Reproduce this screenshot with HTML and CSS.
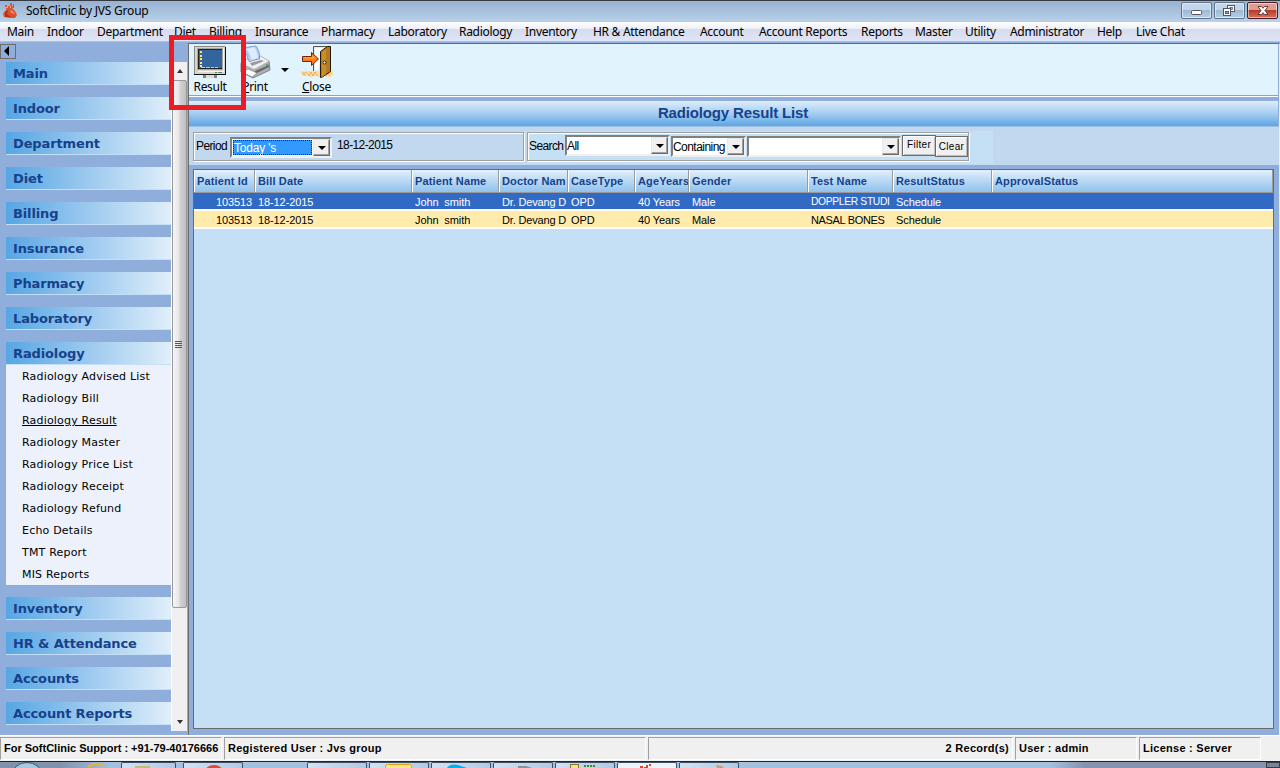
FILE: index.html
```html
<!DOCTYPE html>
<html lang="en">
<head>
    <meta charset="UTF-8">
    <meta name="viewport" content="width=device-width, initial-scale=1.0">
    <title>SoftClinic by JVS Group</title>
    <link rel="stylesheet" href="styles.css">
</head>
<body>
    <div class="titlebar">
        <svg class="app-icon" width="16" height="18" viewBox="0 0 16 18">
            <path d="M4 8 L6 6 L10 6 L13 9 L15 13 L13 16 L8 16 L2 15 L1 12 L3 9 Z" fill="#dc4f2c"/>
            <path d="M3 10 L6 8 L5 12 L9 15 L3 15 Z" fill="#b3331b"/>
            <path d="M8 8 L11 9 L13 12 L9 11 Z" fill="#f08a68"/>
            <path d="M3 3h2v2h-2z M6 4h2v3h-2z M8 1h2v3h-2z M11 2h1v3h-1z M9 4h3v2h-3z M4 6h2v1h-2z" fill="#e2542b"/>
        </svg>
        <span class="app-title">SoftClinic by JVS Group</span>
        <div class="win-buttons">
            <div class="win-btn"><svg width="30" height="15" viewBox="0 0 30 15"><rect x="9.5" y="7.5" width="10" height="4" rx="1" fill="#fff" stroke="#535666"/></svg></div>
            <div class="win-btn"><svg width="30" height="15" viewBox="0 0 30 15"><rect x="12.5" y="2.5" width="7" height="6" fill="#fff" stroke="#535666"/><rect x="15" y="4.5" width="2.5" height="2" fill="#9fb6d0" stroke="#535666" stroke-width=".7"/><rect x="8.5" y="5.5" width="7" height="7" fill="#fff" stroke="#535666"/><rect x="10.5" y="8.5" width="3" height="2" fill="#9fb6d0" stroke="#535666"/></svg></div>
            <div class="win-btn close"><svg width="30" height="15" viewBox="0 0 30 15"><path d="M10 3.500h3.500l1.500 1.800 1.500-1.800h3.500l-3 4 3 4h-3.500l-1.500-1.800-1.500 1.800h-3.500l3-4z" fill="#fff" stroke="#5a3c46"/></svg></div>
        </div>
    </div>

    <div class="menubar">
        <span>Main</span><span>Indoor</span><span>Department</span><span>Diet</span><span>Billing</span><span>Insurance</span><span>Pharmacy</span><span>Laboratory</span><span>Radiology</span><span>Inventory</span><span>HR &amp; Attendance</span><span>Account</span><span>Account Reports</span><span>Reports</span><span>Master</span><span>Utility</span><span>Administrator</span><span>Help</span><span>Live Chat</span>
    </div>

    <div class="workspace">
        <div class="sidebar">
            <div class="collapse"><svg width="13" height="12" viewBox="0 0 13 12"><path d="M8 1v10l-5-5z" fill="#000"/></svg></div>
            <div class="side-body">
                <div class="nav">
                    <div class="nav-head">Main</div>
                    <div class="nav-head">Indoor</div>
                    <div class="nav-head">Department</div>
                    <div class="nav-head">Diet</div>
                    <div class="nav-head">Billing</div>
                    <div class="nav-head">Insurance</div>
                    <div class="nav-head">Pharmacy</div>
                    <div class="nav-head">Laboratory</div>
                    <div class="nav-group">
                        <div class="nav-head">Radiology</div>
                        <div class="nav-list">
                            <a>Radiology Advised List</a>
                            <a>Radiology Bill</a>
                            <a class="active">Radiology Result</a>
                            <a>Radiology Master</a>
                            <a>Radiology Price List</a>
                            <a>Radiology Receipt</a>
                            <a>Radiology Refund</a>
                            <a>Echo Details</a>
                            <a>TMT Report</a>
                            <a>MIS Reports</a>
                        </div>
                    </div>
                    <div class="nav-head">Inventory</div>
                    <div class="nav-head">HR &amp; Attendance</div>
                    <div class="nav-head">Accounts</div>
                    <div class="nav-head">Account Reports</div>
                </div>
                <div class="scrollbar">
                    <div class="arrow up"></div>
                    <div class="thumb"><i></i><i></i><i></i><i></i></div>
                    <div class="arrow down"></div>
                </div>
            </div>
        </div>

        <div class="main">
            <div class="toolbar">
                <div class="tool result">
                    <svg width="34" height="34" viewBox="0 0 34 34" shape-rendering="crispEdges">
                        <rect x="1" y="1" width="32" height="29" fill="#d6d6ce"/>
                        <path d="M1 1h31v1h-30v27h-1z" fill="#8a8a84"/>
                        <path d="M32 2h1v28h-32v-1h31z" fill="#111"/>
                        <path d="M30 3h1v24h-26v-1h25z" fill="#f4f4ee"/>
                        <rect x="4" y="3" width="26" height="22" fill="#a5a59d"/>
                        <rect x="5" y="4" width="24" height="20" fill="#222"/>
                        <rect x="6" y="5" width="23" height="18" fill="#31659c"/>
                        <path d="M7 6h2v2h-2z M7 10h2v2h-2z M7 13h2v2h-2z M7 17h2v2h-2z M7 20h2v2h-2z" fill="#ffe97a"/>
                        <path d="M7 6h2v1h-2z" fill="#7ff"/>
                        <path d="M8 22h4v1h-4z M13 22h4v1h-4z M18 22h3v1h-3z M22 22h3v1h-3z" fill="#b5c8da"/>
                        <path d="M22 27h2v1h-2z" fill="#2a9a2a"/><path d="M25 27h4v1h-4z" fill="#777"/>
                        <rect x="10" y="30" width="14" height="3" fill="#85857f"/>
                        <rect x="13" y="30" width="8" height="3" fill="#deded8"/>
                    </svg>
                    <span>Result</span>
                </div>
                <div class="tool print">
                    <svg width="34" height="34" viewBox="0 0 34 34">
                        <path d="M4 3l14-2q4 5 4 13l-12 3q0-9-6-14z" fill="#a9ccfb" stroke="#7797c9" stroke-width=".8"/>
                        <path d="M8 4l8-2q4 5 4 11l-7 2q0-6-5-11z" fill="#ddecff"/>
                        <path d="M3 18l7-4 1 3 11-3 0-3 9 5 1 9-17 8-12-6z" fill="#b0b0b4" stroke="#6c6c72" stroke-width=".8"/>
                        <path d="M3 18l7-4 1 3 11-3 0-3 9 5-15 8z" fill="#f0f0f3"/>
                        <path d="M12 18l11-3 3 1-12 5z" fill="#9a9aa0"/>
                        <path d="M17 26l14-6v2l-14 7z" fill="#66666c"/>
                        <path d="M5 24l11 4v2l-12-5z" fill="#77777d"/>
                        <path d="M4 27l6-3 9 4-5 4z" fill="#fff" stroke="#85858b" stroke-width=".7"/>
                        <path d="M28 19h2v2h-2z" fill="#39b54a"/>
                    </svg>
                    <span><u>P</u>rint</span>
                </div>
                <div class="drop"></div>
                <div class="tool exit">
                    <svg width="34" height="34" viewBox="0 0 34 34">
                        <path d="M1 26h32v4h-2v2h-6v-2h-4v2h-4v-1h-4v1h-4v-2h-3v1h-3v-2h-2z" fill="#ffdca8"/>
                        <path d="M2 27l4 4m0-4l4 4m0-4l4 4m0-4l4 4m8-4l4 4m0-4l2 2M6 27l-4 3m10-3l-4 4m8-4l-4 4m18-4l-4 4" stroke="#eba655" fill="none" stroke-width=".8"/>
                        <path d="M13.500 26v-24.500h16v25" fill="#e9e9ea" stroke="#555"/>
                        <path d="M15 3h8l-5 22h-3z" fill="#fff"/>
                        <path d="M20.500 6.500l7-5h3v25l-9 6h-1z" fill="#b47a1c" stroke="#21180b"/>
                        <path d="M22 7l4-3v25l-4 3z" fill="#c98c2a"/>
                        <circle cx="24.500" cy="17.500" r="1.500" fill="#fff" stroke="#111" stroke-width=".9"/>
                        <path d="M2.500 11.500h9v-4l7 6.500-7 6.500v-4h-9z" fill="#ff7a14" stroke="#6e2a08"/>
                        <path d="M3.500 12.500h9v-2l3 3h-12z" fill="#ffae52"/>
                    </svg>
                    <span><u>C</u>lose</span>
                </div>
            </div>

            <h1 class="heading">Radiology Result List</h1>

            <div class="filters">
                <div class="box period">
                    <label>Period</label>
                    <div class="combo focus"><span>Today 's</span><b></b></div>
                    <em>18-12-2015</em>
                </div>
                <div class="search-area">
                    <div class="box search">
                        <label>Search</label>
                        <div class="combo c-all"><span>All</span><b></b></div>
                        <div class="combo c-mode"><span>Containing</span><b></b></div>
                        <div class="combo c-value"><span></span><b></b></div>
                        <div class="btn">Filter</div>
                        <div class="btn clear">Clear</div>
                    </div>
                </div>
            </div>

            <div class="grid">
                <div class="row head">
                    <div>Patient Id</div><div>Bill Date</div><div>Patient Name</div><div>Doctor Nam</div><div>CaseType</div><div>AgeYears</div><div>Gender</div><div>Test Name</div><div>ResultStatus</div><div>ApprovalStatus</div>
                </div>
                <div class="row selected">
                    <div>103513</div><div>18-12-2015</div><div>John&nbsp; smith</div><div>Dr. Devang D</div><div>OPD</div><div>40 Years</div><div>Male</div><div class="tight">DOPPLER STUDI</div><div>Schedule</div><div></div>
                </div>
                <div class="row">
                    <div>103513</div><div>18-12-2015</div><div>John&nbsp; smith</div><div>Dr. Devang D</div><div>OPD</div><div>40 Years</div><div>Male</div><div>NASAL BONES</div><div>Schedule</div><div></div>
                </div>
            </div>
        </div>
    </div>

    <div class="statusbar">
        <div>For SoftClinic Support : +91-79-40176666</div>
        <div class="wide">Registered User : Jvs group</div>
        <div class="wide records">2 Record(s)</div>
        <div class="wide">User : admin</div>
        <div class="wide">License : Server</div>
    </div>

    <div class="taskbar">
        <div class="start"><svg width="121" height="6" viewBox="0 0 121 6"><ellipse cx="27" cy="13" rx="15" ry="12.500" fill="#a9c8de" stroke="#2b5577"/><path d="M88 5q8-6 16-1" fill="none" stroke="#e3b53c" stroke-width="2"/></svg></div>
        <div class="task"><svg width="55" height="5"><rect x="13" y="3" width="15" height="2" fill="#c9b878"/></svg></div>
        <div class="task"><svg width="60" height="5"><ellipse cx="30" cy="9" rx="9" ry="7" fill="#d9483b"/></svg></div>
        <div class="task"></div>
        <div class="task"><svg width="60" height="5"><rect x="15.500" y="1.500" width="26" height="8" rx="2" fill="#fbe58a" stroke="#e0a21b"/></svg></div>
        <div class="task"><svg width="59" height="5"><path d="M15 5q3-5 11-3l9 3z" fill="#00aff0"/></svg></div>
        <div class="task"><svg width="59" height="5"><path d="M24 3h8l6 2h-14z" fill="#8b9093"/></svg></div>
        <div class="task"><svg width="59" height="5"><rect x="14.500" y="1.500" width="8" height="5" fill="#f3e19a" stroke="#8b7428"/><path d="M28 3h12" stroke="#3c8a35" stroke-width="2" stroke-dasharray="2 1"/></svg></div>
        <div class="task current"><svg width="59" height="5"><path d="M22 3h3v2h-3z M26 4h2v1h-2z M28 2h2v3h-2z M31 1h2v2h-2z" fill="#d5492a"/></svg></div>
        <div class="task"><svg width="59" height="5"><path d="M36 2l6 1 2 2h-7z" fill="#c89d73"/></svg></div>
        <div class="desk"></div>
    </div>

    <div class="marker"></div>
</body>
</html>
```
FILE: styles.css
```css
* {
    margin: 0;
    padding: 0;
    box-sizing: border-box;
}
body {
    width: 1280px;
    height: 768px;
    overflow: hidden;
    position: relative;
    display: flex;
    flex-direction: column;
    background: #90aedb;
    color: #000;
    font-family: "Liberation Sans", Arial, sans-serif;
    font-size: 11px;
    white-space: nowrap;
}
svg {
    display: block;
    flex: none;
}

/* title bar */
.titlebar {
    height: 22px;
    flex: none;
    display: flex;
    border-top: 1px solid #363a42;
    background: linear-gradient(#97b2d2, #b9d1ea);
    font-family: "Noto Sans", sans-serif;
}
.app-icon {
    margin: 1px 0 0 2px;
}
.app-title {
    margin-left: 8px;
    font-size: 12px;
    line-height: 20px;
    letter-spacing: -0.22px;
}
.win-buttons {
    display: flex;
    gap: 2px;
    margin: 1px 2px 0 auto;
}
.win-btn {
    width: 31px;
    height: 17px;
    border: 1px solid #5d7390;
    border-radius: 2px;
    box-shadow: inset 0 0 0 1px rgba(255, 255, 255, 0.5);
    background: linear-gradient(#c3d5e8 48%, #9fb8d3 50%, #b8cfe5);
}
.win-btn.close {
    border-color: #4c1a26;
    background: linear-gradient(#dd9d90 45%, #ba3a25 50%, #d8735a);
}

/* menu */
.menubar {
    height: 20px;
    flex: none;
    display: grid;
    grid-template-columns: 40px 50px 77px 35px 46px 66px 67px 71px 66px 68px 107px 59px 102px 54px 50px 45px 87px 39px 60px;
    padding-left: 7px;
    border-bottom: 1px solid #b3bdd4;
    background: linear-gradient(#fff, #eceff8 35%, #d5dcee 38%, #dfe5f6);
    font-family: "Noto Sans", sans-serif;
    font-size: 12px;
    line-height: 19px;
    letter-spacing: -0.3px;
}

.workspace {
    height: 693px;
    flex: none;
    display: flex;
}

/* sidebar */
.sidebar {
    width: 188px;
    padding-top: 2px;
}
.collapse {
    width: 16px;
    height: 15px;
    border: 1px solid #6d6d6d;
}
.side-body {
    display: flex;
    justify-content: space-between;
    padding: 3px 1px 0 6px;
    height: 672px;
}
.nav {
    width: 165px;
    display: flex;
    flex-direction: column;
    gap: 12px;
}
.nav-head {
    height: 23px;
    flex: none;
    padding-left: 7px;
    border-bottom: 1px solid #c3e0f8;
    background: linear-gradient(90deg, #57a6e4, #a3cdf0 55%, #e0effa);
    color: #15428b;
    font: bold 13px/24px "DejaVu Sans", Verdana, sans-serif;
    letter-spacing: -0.13px;
}
.nav-list {
    display: flex;
    flex-direction: column;
    height: 220px;
    padding: 1px 0 0 16px;
    background: #edf1fc;
    font-family: "DejaVu Sans", Verdana, sans-serif;
    letter-spacing: 0.19px;
}
.nav-list a {
    line-height: 22px;
    height: 22px;
}
.nav-list .active {
    text-decoration: underline;
}
.scrollbar {
    width: 16px;
    display: flex;
    flex-direction: column;
    background: #f0f0f0;
    border-left: 1px solid #fff;
}
.arrow {
    height: 18px;
    display: flex;
    justify-content: center;
    align-items: center;
}
.arrow.down {
    margin-top: auto;
}
.arrow::after {
    content: "";
    border: 3.5px solid transparent;
}
.arrow.up::after {
    border-top: 0;
    border-bottom: 4px solid #333;
}
.arrow.down::after {
    border-bottom: 0;
    border-top: 4px solid #333;
}
.thumb {
    height: 528px;
    display: flex;
    flex-direction: column;
    justify-content: center;
    align-items: center;
    gap: 1px;
    border: 1px solid #979797;
    border-radius: 2px;
    background: linear-gradient(90deg, #f6f6f6, #e6e6e6 45%, #d2d2d4 55%, #bfbfc3);
}
.thumb i {
    width: 7px;
    height: 1px;
    margin-left: -3px;
    background: #555;
}

/* main panel */
.main {
    flex: 1;
    display: flex;
    flex-direction: column;
    margin-top: 1px;
    border: solid #6b6b6b;
    border-width: 1px 0 0 1px;
    border-right: 1px solid #e8eef8;
    min-width: 0;
}
.toolbar {
    height: 53px;
    flex: none;
    display: flex;
    margin-right: 1px;
    background: #e1f3fd;
    border-bottom: 1px solid #fff;
    box-shadow: inset 0 -1px #a0a0a0;
    font-family: "Noto Sans", sans-serif;
    font-size: 12px;
}
.tool {
    display: flex;
    flex-direction: column;
    align-items: center;
    letter-spacing: -0.3px;
    line-height: 16px;
    padding-top: 1px;
}
.result {
    width: 42px;
}
.print {
    margin-left: 4px;
    width: 40px;
}
.drop {
    margin: 24px 0 0 6px;
    width: 8px;
    height: 4px;
    border: 4px solid transparent;
    border-top-color: #000;
    border-bottom: 0;
}
.exit {
    margin-left: 8px;
    width: 39px;
}
.heading {
    height: 25px;
    flex: none;
    margin: 4px 1px 0 0;
    padding-right: 1px;
    text-align: center;
    color: #15428b;
    background: linear-gradient(#deedfb, #a5cdf0 50%, #5ba6e3);
    font-size: 15px;
    line-height: 24px;
    letter-spacing: -0.15px;
}
.filters {
    height: 39px;
    flex: none;
    display: flex;
    gap: 3px;
    padding: 4px 0 1px 4px;
    border-top: 1px solid #9fc0e6;
    background: #c1d8ef;
}
.box {
    display: flex;
    align-items: flex-start;
    height: 29px;
    border: 1px solid #a0a0a0;
    box-shadow: 1px 1px #fff, inset 1px 1px #fff;
}
.box label {
    line-height: 27px;
    font-size: 12px;
    letter-spacing: -0.6px;
    padding-left: 2px;
}
.period {
    width: 331px;
    margin-top: 1px;
}
.period label {
    width: 36px;
}
.period em {
    font-style: normal;
    font-size: 12px;
    letter-spacing: -0.6px;
    line-height: 24px;
    margin-left: 5px;
}
.search-area {
    width: 466px;
    padding-top: 1px;
    background: #c5dff5;
}
.search {
    width: 442px;
    height: 29px;
}
.search label {
    width: 37px;
    padding-left: 1px;
}
.combo {
    height: 21px;
    display: flex;
    border: 2px solid;
    border-color: #808080 #f0f0f0 #f0f0f0 #808080;
    background: #fff;
    font-size: 12px;
    letter-spacing: -0.55px;
}
.combo span {
    flex: 1;
    line-height: 18px;
}
.combo b {
    width: 17px;
    display: flex;
    justify-content: center;
    align-items: center;
    background: #f0f0f0;
    border: 1px solid;
    border-color: #e8e8e8 #6b6b6b #6b6b6b #e8e8e8;
    box-shadow: inset -1px -1px #a0a0a0;
}
.combo b::after {
    content: "";
    border: 4px solid transparent;
    border-top-color: #000;
    border-bottom: 0;
}
.focus {
    width: 102px;
    height: 21px;
    margin-top: 4px;
}
.focus span {
    margin: 1px;
    padding-left: 1px;
    line-height: 16px;
    background: #3399ff;
    color: #fff;
    outline: 1px dotted #26221c;
    outline-offset: -1px;
    letter-spacing: -0.2px;
}
.c-all {
    width: 105px;
    margin-top: 2px;
}
.c-mode {
    width: 75px;
    margin: 3px 0 0 1px;
}
.c-value {
    width: 154px;
    margin: 3px 0 0 1px;
}
.btn {
    width: 34px;
    height: 21px;
    margin: 2px 0 0 1px;
    border: 1px solid #6b6b6b;
    box-shadow: inset 1px 1px #fff, inset -1px -1px #c0c0c0;
    background: #f0f0f0;
    text-align: center;
    font-size: 10px;
    line-height: 18px;
    letter-spacing: 0.3px;
}
.btn.clear {
    width: 33px;
    height: 21px;
    margin: 3px 0 0 -1px;
    line-height: 19px;
}

/* result grid */
.grid {
    flex: 1;
    margin: 4px 5px 6px 4px;
    border: 1px solid #6b6b6b;
    background: #c5dff5;
}
.row {
    display: grid;
    grid-template-columns: 61px 157px 87px 69px 67px 54px 119px 85px 99px 1fr;
    height: 18px;
    border-bottom: 2px solid #fff;
    background: #ffecac;
    line-height: 18px;
}
.row div {
    padding-left: 3px;
    height: 18px;
    letter-spacing: -0.1px;
}
.row:not(.head) div:first-child {
    text-align: right;
    padding-right: 3px;
}
.row:not(.head) div:nth-child(4) {
    letter-spacing: -0.17px;
}
.row:not(.head) div:nth-child(8) {
    letter-spacing: -0.34px;
}
.row .tight {
    font-size: 10.3px;
}
.row.selected {
    background: #316ac5;
    color: #fff;
}
.row.head {
    height: 23px;
    border-bottom: 1px solid #999;
    background: linear-gradient(#e3f0fc, #b8d8f4 50%, #90c2ec);
    color: #15428b;
    font-weight: bold;
    line-height: 22px;
}
.row.head div {
    height: 22px;
    overflow: hidden;
    border-right: 1px solid #9a9a9a;
    box-shadow: inset 1px 0 #fff;
    letter-spacing: 0.14px;
}

/* status bar */
.statusbar {
    height: 26px;
    flex: none;
    display: grid;
    grid-template-columns: 222px 422px 365px 122px 122px;
    gap: 2px;
    padding-top: 1px;
    border-top: 1px solid #fff;
    background: #f0f0f0;
    font-weight: bold;
    line-height: 20px;
}
.statusbar div {
    height: 23px;
    padding: 0 3px;
    border: 1px solid;
    border-color: #a0a0a0 #fff #fff #a0a0a0;
}
.statusbar .wide {
    letter-spacing: 0.26px;
}
.statusbar .records {
    text-align: right;
}

/* taskbar */
.taskbar {
    height: 7px;
    flex: none;
    display: flex;
    gap: 2px;
    border-top: 1px solid #1d2733;
    background: linear-gradient(90deg, #8093ad, #8093ad 60px, #a4c0df 110px, #a4c0df 1050px, #8593ae 1085px);
}
.start {
    width: 119px;
}
.task {
    width: 60px;
    border: 1px solid #3c5068;
    border-bottom: 0;
    border-radius: 2px 2px 0 0;
    background: linear-gradient(90deg, #d3e0ef, #b4c9e2);
}
.task:nth-child(2) {
    width: 55px;
    margin-right: 5px;
}
.task:nth-child(4) {
    margin-left: 62px;
}
.task.current {
    background: #eef3fa;
}
.desk {
    width: 14px;
    margin-left: auto;
    border: 1px solid #333d4c;
    background: #7c8494;
}

/* highlight round the Result button */
.marker {
    position: absolute;
    left: 169px;
    top: 35px;
    width: 77px;
    height: 75px;
    border: 5px solid #ed1c24;
}
```
